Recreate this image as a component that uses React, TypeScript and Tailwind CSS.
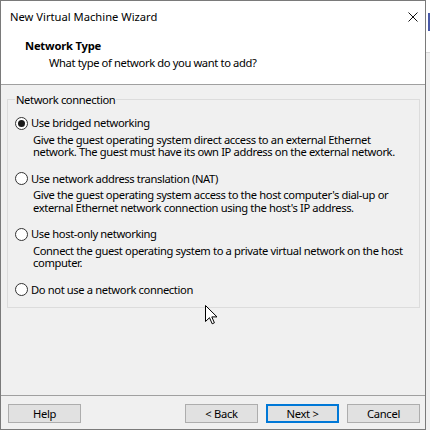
import React from "react";

function Radio({ checked }: { checked?: boolean }) {
  return (
    <span className="w-[13px] h-[13px] rounded-full border border-[#333333] bg-white flex items-center justify-center shrink-0">
      {checked && <span className="w-[7px] h-[7px] rounded-full bg-[#1a1a1a]" />}
    </span>
  );
}

function Option({
  label,
  lines,
  checked,
  last,
}: {
  label: string;
  lines: string[];
  checked?: boolean;
  last?: boolean;
}) {
  return (
    <div className={last ? "" : "mb-[12px]"}>
      <div className="h-[16px] flex items-center gap-[3px]">
        <Radio checked={checked} />
        <span className="leading-[16px] whitespace-nowrap tracking-[-0.38px]">{label}</span>
      </div>
      {lines.length > 0 && (
        <div className="pl-[18px] mt-[2.5px] leading-[12.5px] whitespace-nowrap tracking-[-0.38px]">
          {lines[0]}
          <br />
          {lines[1]}
        </div>
      )}
    </div>
  );
}

function Btn({ children, primary }: { children: React.ReactNode; primary?: boolean }) {
  return (
    <div
      className={
        "w-[73px] h-[19px] flex items-center justify-center bg-[#e1e1e1] leading-[16px] tracking-[-0.3px] " +
        (primary ? "border-2 border-[#0078d7]" : "border border-[#adadad]")
      }
    >
      {children}
    </div>
  );
}

export default function App() {
  return (
    <div className="relative w-[430px] h-[433px] bg-white flex font-['Noto_Sans',sans-serif] text-[11.2px] text-black">
      <div className="w-[426px] h-[430px] border border-[#7a7a7a] flex flex-col bg-[#f0f0f0]">
        <div className="h-[84px] bg-white border-b border-[#a0a0a0] flex flex-col">
          <div className="h-[31px] flex items-center justify-between pl-[9px] pr-[7px]">
            <span className="leading-[16px]">New Virtual Machine Wizard</span>
            <svg width="10" height="10" viewBox="0 0 10 10">
              <path d="M0.5 0.5 L9.5 9.5 M9.5 0.5 L0.5 9.5" stroke="#111" strokeWidth="1" />
            </svg>
          </div>
          <div className="pl-[24px] pt-[6px] leading-[16px] font-bold tracking-[-0.2px]">Network Type</div>
          <div className="pl-[48px] mt-[1px] leading-[16px] tracking-[-0.38px]">
            What type of network do you want to add?
          </div>
        </div>
        <div className="h-[310px] pl-[6px] pt-[14px]">
          <div className="relative w-[413px] h-[209px] border border-[#dcdcdc] pt-[15px] pl-[7px]">
            <span className="absolute left-[7px] -top-[8px] px-[1px] bg-[#f0f0f0] leading-[16px] tracking-[-0.38px]">
              Network connection
            </span>
            <Option
              checked
              label="Use bridged networking"
              lines={[
                "Give the guest operating system direct access to an external Ethernet",
                "network. The guest must have its own IP address on the external network.",
              ]}
            />
            <Option
              label="Use network address translation (NAT)"
              lines={[
                "Give the guest operating system access to the host computer's dial-up or",
                "external Ethernet network connection using the host's IP address.",
              ]}
            />
            <Option
              label="Use host-only networking"
              lines={[
                "Connect the guest operating system to a private virtual network on the host",
                "computer.",
              ]}
            />
            <Option last label="Do not use a network connection" lines={[]} />
          </div>
        </div>
        <div className="h-[34px] border-t border-[#a0a0a0] flex items-start pt-[8px] pl-[7px] pr-[5px]">
          <Btn>Help</Btn>
          <div className="flex-1" />
          <div className="flex gap-[8px]">
            <Btn>&lt; Back</Btn>
            <Btn primary>Next &gt;</Btn>
            <Btn>Cancel</Btn>
          </div>
        </div>
      </div>
      <div className="w-[4px] h-[430px] flex flex-col">
        <div className="h-[13px] bg-white" />
        <div className="h-[18px] flex">
          <div className="w-[2px] bg-white" />
          <div className="w-[2px] bg-[#4a5aa8]" />
        </div>
        <div className="h-[21px] bg-white" />
        <div className="flex-1 bg-[#f0f0f0] border-t border-[#d8d8d8]" />
      </div>
      <svg
        className="absolute left-[205px] top-[305px]"
        width="13"
        height="20"
        viewBox="0 0 13 20"
      >
        <path
          d="M0.5 0.5 L0.5 16.5 L4.5 12.7 L7.2 18.8 L9.4 17.8 L6.8 11.9 L12 11.9 Z"
          fill="#fff"
          stroke="#000"
          strokeWidth="1"
          strokeLinejoin="miter"
        />
      </svg>
    </div>
  );
}
